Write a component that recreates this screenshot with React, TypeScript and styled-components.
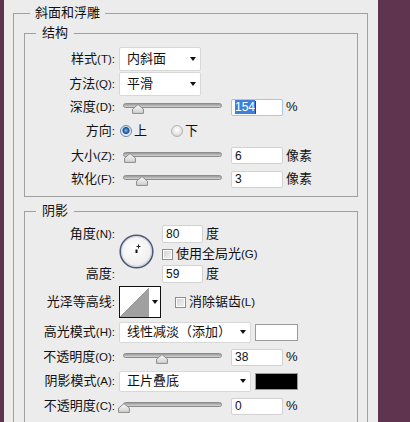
import styled, { createGlobalStyle } from 'styled-components';

const GlobalStyle = createGlobalStyle`
	html, body {
		margin: 0;
		padding: 0;
	}
	body {
		background: #5e344e;
		font-family: "Liberation Sans", "Noto Sans CJK SC", sans-serif;
	}
`;

function Slider({ value }: { value: number }) {
	return (
		<SliderBox>
			<Track />
			<Thumb style={{ left: `${value * 99}px` }} viewBox='0 0 12 10'>
				<defs>
					<linearGradient id='thumbFill' x1='0' y1='0' x2='0' y2='1'>
						<stop offset='0' stopColor='#fafafa' />
						<stop offset='1' stopColor='#cfcfcf' />
					</linearGradient>
				</defs>
				<polygon
					points='6,0.6 11.4,5 11.4,9.4 0.6,9.4 0.6,5'
					fill='url(#thumbFill)'
					stroke='#8a8a8a'
					strokeWidth='1'
				/>
			</Thumb>
		</SliderBox>
	);
}

function Dial() {
	return (
		<DialSvg viewBox='0 0 36 36'>
			<defs>
				<radialGradient id='dialFill' cx='45%' cy='40%' r='65%'>
					<stop offset='0' stopColor='#ffffff' />
					<stop offset='0.75' stopColor='#f0f0f0' />
					<stop offset='1' stopColor='#d2d2d2' />
				</radialGradient>
			</defs>
			<circle cx='17.5' cy='17.5' r='16.3' fill='url(#dialFill)' stroke='#4d5a76' strokeWidth='1.6' />
			<circle cx='17.5' cy='17.5' r='15' fill='none' stroke='#c4cad4' strokeWidth='0.8' />
			<path d='M19.5 10.5v4M17.5 12.5h4' stroke='#222' strokeWidth='1' />
			<path d='M17.5 19v-3.5' stroke='#111' strokeWidth='2' />
		</DialSvg>
	);
}

// label text: the Chinese name, then the shortcut key in a smaller latin face
function Caption({ name, hotkey }: { name: string; hotkey?: string }) {
	return (
		<Label>
			{name}
			<Hot>{hotkey ? `(${hotkey}):` : ':'}</Hot>
		</Label>
	);
}

export default function App() {
	return (
		<>
			<GlobalStyle />
			<Screen>
				<Panel>
					<Group $pad='4px 9px 0 10px'>
						<Legend $indent={6} $pad={5}>斜面和浮雕</Legend>

						<SubGroup>
							<Legend $indent={11} $pad={6}>结构</Legend>
							<Body>
								<Row $h={25}>
									<Caption name='样式' hotkey='T' />
									<Select $w={82} $h={24}>
										内斜面
										<Caret />
									</Select>
								</Row>
								<Row $h={25}>
									<Caption name='方法' hotkey='Q' />
									<Select $w={82} $h={24}>
										平滑
										<Caret />
									</Select>
								</Row>
								<Row $h={22}>
									<Caption name='深度' hotkey='D' />
									<Slider value={0.146} />
									<Field $w={52} $focused>
										<Selected>154</Selected>
										<TextCaret />
									</Field>
									<Unit>%</Unit>
								</Row>
								<Row $h={25}>
									<Caption name='方向' />
									<Radio $on />
									<RadioText>上</RadioText>
									<Radio />
									<RadioText>下</RadioText>
								</Row>
								<Row $h={25}>
									<Caption name='大小' hotkey='Z' />
									<Slider value={0.056} />
									<Field $w={52}>6</Field>
									<Unit>像素</Unit>
								</Row>
								<Row $h={22}>
									<Caption name='软化' hotkey='F' />
									<Slider value={0.18} />
									<Field $w={52}>3</Field>
									<Unit>像素</Unit>
								</Row>
							</Body>
						</SubGroup>

						<SubGroup $gap={6}>
							<Legend $indent={11} $pad={6}>阴影</Legend>
							<Body>
								<AngleBlock>
									<AngleLabels>
										<Caption name='角度' hotkey='N' />
										<Caption name='高度' />
									</AngleLabels>
									<Dial />
									<AngleFields>
										<FieldRow>
											<Field $w={41} $h={18}>80</Field>
											<Unit>度</Unit>
										</FieldRow>
										<FieldRow>
											<Check />
											<CheckText>
												使用全局光<Hot>(G)</Hot>
											</CheckText>
										</FieldRow>
										<FieldRow>
											<Field $w={41} $h={18}>59</Field>
											<Unit>度</Unit>
										</FieldRow>
									</AngleFields>
								</AngleBlock>

								<Row $h={34} $top={1}>
									<Caption name='光泽等高线' />
									<Contour>
										<ContourPicture />
										<ContourArrow>
											<Caret />
										</ContourArrow>
									</Contour>
									<Check $left={14} />
									<CheckText>
										消除锯齿<Hot>(L)</Hot>
									</CheckText>
								</Row>
								<Row $h={26}>
									<Caption name='高光模式' hotkey='H' />
									<Select $w={132} $h={21}>
										线性减淡（添加）
										<Caret />
									</Select>
									<Swatch $color='#ffffff' />
								</Row>
								<Row $h={24}>
									<Caption name='不透明度' hotkey='O' />
									<Slider value={0.38} />
									<Field $w={52}>38</Field>
									<Unit>%</Unit>
								</Row>
								<Row $h={24}>
									<Caption name='阴影模式' hotkey='A' />
									<Select $w={132} $h={21}>
										正片叠底
										<Caret />
									</Select>
									<Swatch $color='#000000' />
								</Row>
								<Row $h={26}>
									<Caption name='不透明度' hotkey='C' />
									<Slider value={0} />
									<Field $w={52}>0</Field>
									<Unit>%</Unit>
								</Row>
							</Body>
						</SubGroup>
					</Group>
				</Panel>
			</Screen>
		</>
	);
}

const Screen = styled.div`
	display: flex;
	width: 410px;
	height: 422px;
	overflow: hidden;
	background: #5e344e;
`;

const Panel = styled.div`
	flex: none;
	width: 374px;
	margin-left: 4px;
	box-sizing: border-box;
	padding: 5px 10px 0 9px;
	background: #ececec;
	color: #111;
	font-size: 13px;
	line-height: 16px;
`;

const Group = styled.fieldset<{ $pad: string }>`
	margin: 0;
	min-width: 0;
	padding: ${(p) => p.$pad};
	border: 1px solid #a0a0a0;
`;

const SubGroup = styled.fieldset<{ $gap?: number }>`
	margin: ${(p) => p.$gap ?? 0}px 0 0 0;
	min-width: 0;
	padding: 0;
	border: 1px solid #a0a0a0;
`;

const Legend = styled.legend<{ $indent: number; $pad: number }>`
	margin-left: ${(p) => p.$indent}px;
	padding: 0 ${(p) => p.$pad}px;
	height: 16px;
	line-height: 16px;
	color: #111;
`;

const Body = styled.div`
	padding: 5px 0 6px 0;
`;

const Row = styled.div<{ $h: number; $top?: number }>`
	display: flex;
	align-items: center;
	height: ${(p) => p.$h}px;
	margin-top: ${(p) => p.$top ?? 0}px;
`;

const Label = styled.span`
	flex: none;
	width: 90px;
	margin-right: 4px;
	text-align: right;
	white-space: nowrap;
	color: #111;
`;

const Hot = styled.span`
	font-family: "Liberation Sans", sans-serif;
	font-size: 11.5px;
`;

const Select = styled.div<{ $w: number; $h: number }>`
	flex: none;
	display: flex;
	align-items: center;
	justify-content: space-between;
	box-sizing: border-box;
	width: ${(p) => p.$w}px;
	height: ${(p) => p.$h}px;
	padding: 0 4px 0 7px;
	background: #fff;
	border: 1px solid #d8d8d8;
	border-radius: 2px;
	white-space: nowrap;
`;

const Caret = styled.span`
	width: 0;
	height: 0;
	border-left: 3.5px solid transparent;
	border-right: 3.5px solid transparent;
	border-top: 4px solid #111;
`;

const SliderBox = styled.div`
	position: relative;
	flex: none;
	width: 104px;
	height: 14px;
	margin-left: -1px;
`;

const Track = styled.div`
	position: absolute;
	left: 5px;
	right: 0;
	top: 3px;
	height: 5px;
	box-sizing: border-box;
	border: 1px solid #8c8c8c;
	border-radius: 3px;
	background: linear-gradient(#9a9a9a, #d4d4d4);
`;

const Thumb = styled.svg`
	position: absolute;
	top: 4px;
	width: 12px;
	height: 10px;
`;

const Field = styled.div<{ $w: number; $h?: number; $focused?: boolean }>`
	flex: none;
	display: flex;
	align-items: center;
	box-sizing: border-box;
	width: ${(p) => p.$w}px;
	height: ${(p) => p.$h ?? 17}px;
	margin-left: 9px;
	padding-left: 3px;
	background: #fff;
	border: 1px solid ${(p) => (p.$focused ? '#a9c6e6' : '#d2d2d2')};
	border-radius: 2px;
	font-family: "Liberation Sans", sans-serif;
	font-size: 12px;
	color: #111;
`;

const Selected = styled.span`
	background: #3f7fdb;
	color: #fff;
	line-height: 14px;
`;

const TextCaret = styled.span`
	width: 1px;
	height: 13px;
	background: #5a4020;
`;

const Unit = styled.span`
	margin-left: 3px;
	white-space: nowrap;
`;

const Radio = styled.span<{ $on?: boolean }>`
	flex: none;
	box-sizing: border-box;
	width: 12px;
	height: 12px;
	margin-left: 1px;
	border-radius: 50%;
	border: 1px solid ${(p) => (p.$on ? '#6a86a6' : '#b4b4b4')};
	background: ${(p) =>
		p.$on
			? 'radial-gradient(circle at 50% 45%, #8fc0ee 0, #2f6fb6 2px, #1b4f8f 3px, #cfdcea 4px, #f6f6f6 5px)'
			: 'radial-gradient(circle at 50% 40%, #ffffff 0, #eeeeee 3px, #d6d6d6 6px)'};
`;

const RadioText = styled.span`
	margin: 0 23px 0 2px;
`;

const AngleBlock = styled.div`
	display: flex;
	height: 60px;
`;

const AngleLabels = styled.div`
	display: flex;
	flex-direction: column;
	justify-content: space-between;
	padding: 2px 0;
`;

const DialSvg = styled.svg`
	flex: none;
	width: 36px;
	height: 36px;
	margin-top: 10px;
`;

const AngleFields = styled.div`
	display: flex;
	flex-direction: column;
	margin-left: 7px;
`;

const FieldRow = styled.div`
	display: flex;
	align-items: center;
	height: 20px;

	& > ${Field} {
		margin-left: 0;
	}
`;

const Check = styled.span<{ $left?: number }>`
	flex: none;
	box-sizing: border-box;
	width: 11px;
	height: 11px;
	margin-left: ${(p) => p.$left ?? 0}px;
	border: 1px solid #8e8e8e;
	background: linear-gradient(135deg, #d2d2d2, #f4f4f4);
	box-shadow: inset 0 0 0 1px #fff;
`;

const CheckText = styled.span`
	margin-left: 3px;
	white-space: nowrap;
`;

const Contour = styled.div`
	flex: none;
	display: flex;
	box-sizing: border-box;
	width: 42px;
	height: 32px;
	border: 1px solid #111;
	background: #fff;
`;

const ContourPicture = styled.div`
	flex: 1;
	background: linear-gradient(to bottom right, #ffffff 50%, #a0a0a0 50%);
`;

const ContourArrow = styled.div`
	display: flex;
	align-items: center;
	justify-content: center;
	width: 11px;
`;

const Swatch = styled.span<{ $color: string }>`
	flex: none;
	box-sizing: border-box;
	width: 43px;
	height: 17px;
	margin-left: 4px;
	background: ${(p) => p.$color};
	border: 1px solid #9a9a9a;
`;
